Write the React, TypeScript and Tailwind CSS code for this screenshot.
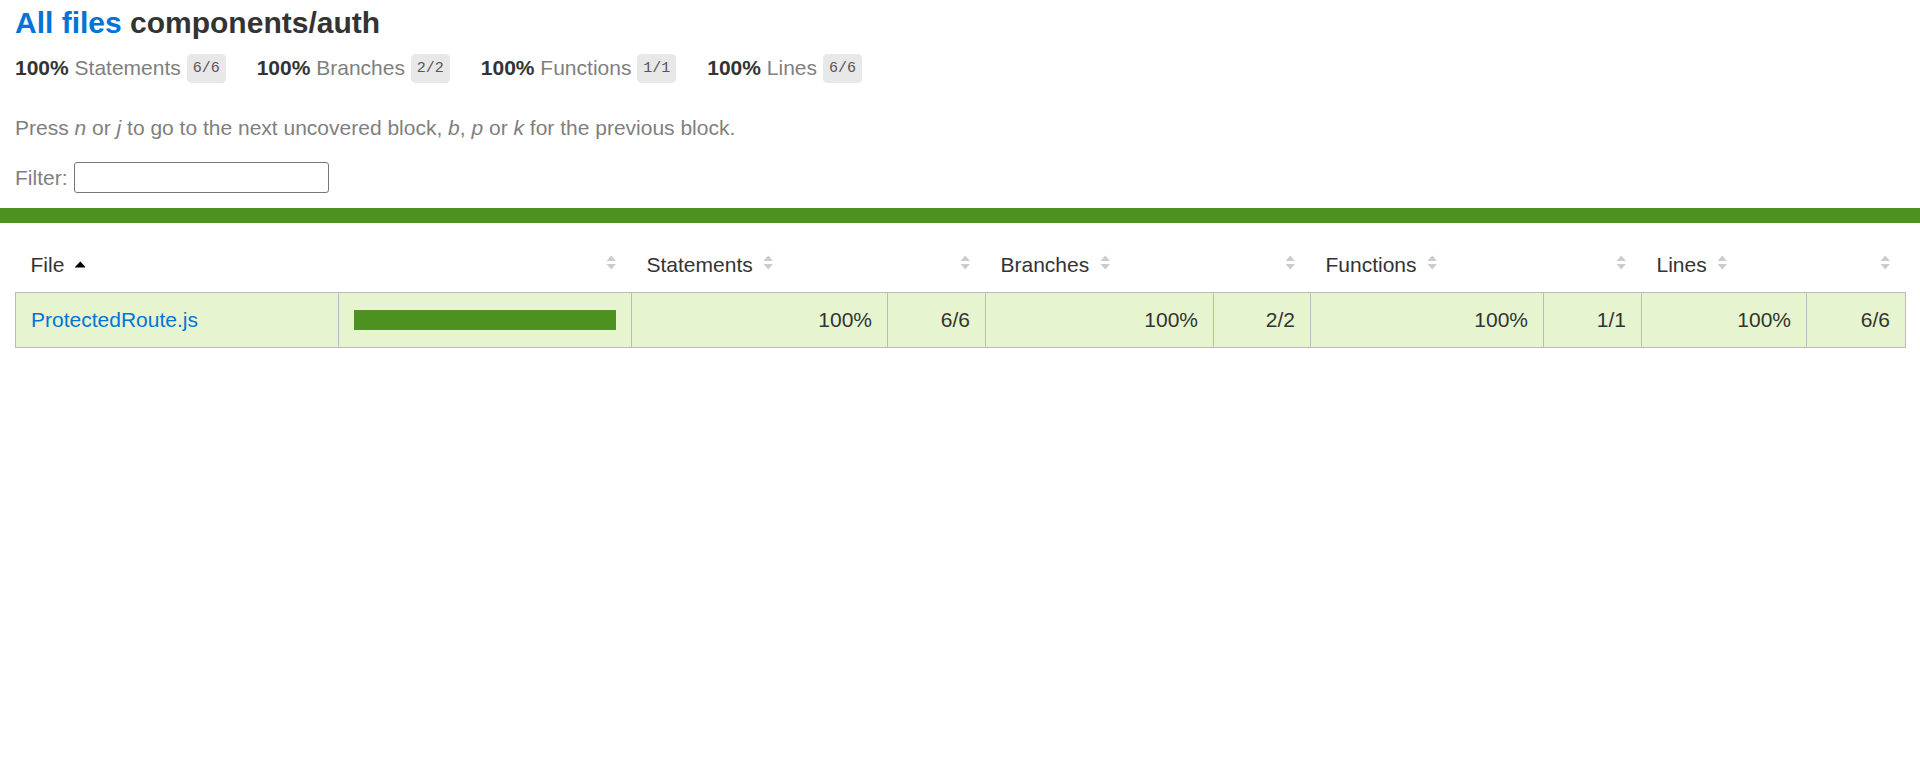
type Metric = { label: string; pct: string; frac: string }

const metrics: Metric[] = [
  { label: "Statements", pct: "100%", frac: "6/6" },
  { label: "Branches", pct: "100%", frac: "2/2" },
  { label: "Functions", pct: "100%", frac: "1/1" },
  { label: "Lines", pct: "100%", frac: "6/6" },
]

const cols = [323, 293, 256, 98, 228, 97, 233, 98, 165, 99]

function Sorter({ sorted = false }: { sorted?: boolean }) {
  return (
    <svg
      width="10.5"
      height="15"
      viewBox="0 0 10.5 15"
      className="ml-[10.5px] inline-block align-[2px]"
    >
      {sorted ? (
        <polygon points="-0.5,12.5 5.25,6.5 11,12.5" fill="#000" />
      ) : (
        <>
          <polygon points="0.5,6 5.25,0.5 10,6" fill="#cccccc" />
          <polygon points="0.5,9 5.25,14.5 10,9" fill="#cccccc" />
        </>
      )}
    </svg>
  )
}

const row = ["100%", "6/6", "100%", "2/2", "100%", "1/1", "100%", "6/6"]

export default function App() {
  return (
    <div className="min-h-screen bg-white font-['Liberation_Sans',Arial,sans-serif] text-[21px] text-[#333]">
      <div className="px-[15px] pt-[6px]">
        <h1 className="m-0 text-[30px] font-bold leading-[34px]">
          <a href="#" className="text-[#0074D9]">All files</a> components/auth
        </h1>

        <div className="mt-[16px] flex leading-[24px]">
          {metrics.map((m) => (
            <div key={m.label} className="pr-[31px] whitespace-nowrap">
              <span className="font-bold">{m.pct}</span>{" "}
              <span className="text-[#7f7f7f]">{m.label}</span>{" "}
              <span className="rounded-[4.5px] bg-[#e8e8e8] px-[6px] py-[6px] align-middle font-['Liberation_Mono',monospace] text-[15px] text-[#555]">
                {m.frac}
              </span>
            </div>
          ))}
        </div>

        <p className="mt-[35px] leading-[24px] text-[#7f7f7f]">
          Press <em>n</em> or <em>j</em> to go to the next uncovered block, <em>b</em>, <em>p</em> or{" "}
          <em>k</em> for the previous block.
        </p>

        <div className="mt-[22px] flex h-[31px] items-center leading-[24px] text-[#7f7f7f]">
          <span>Filter:</span>
          <input
            type="search"
            className="ml-[6px] h-[31px] w-[255px] rounded-[3px] border border-[#767676] bg-white px-1 outline-none"
          />
        </div>
      </div>

      <div className="mt-[15px] h-[15px] bg-[rgb(77,146,33)]" />

      <div className="px-[15px] pt-[15px]">
        <table className="w-full table-fixed border-collapse">
          <colgroup>
            {cols.map((w, i) => (
              <col key={i} style={{ width: w }} />
            ))}
          </colgroup>
          <thead>
            <tr className="leading-[24px]">
              <th className="whitespace-nowrap p-[15px] text-left font-normal">
                File<Sorter sorted />
              </th>
              <th className="p-[15px] text-right font-normal"><Sorter /></th>
              <th className="whitespace-nowrap p-[15px] text-left font-normal">
                Statements<Sorter />
              </th>
              <th className="p-[15px] text-right font-normal"><Sorter /></th>
              <th className="whitespace-nowrap p-[15px] text-left font-normal">
                Branches<Sorter />
              </th>
              <th className="p-[15px] text-right font-normal"><Sorter /></th>
              <th className="whitespace-nowrap p-[15px] text-left font-normal">
                Functions<Sorter />
              </th>
              <th className="p-[15px] text-right font-normal"><Sorter /></th>
              <th className="whitespace-nowrap p-[15px] text-left font-normal">
                Lines<Sorter />
              </th>
              <th className="p-[15px] text-right font-normal"><Sorter /></th>
            </tr>
          </thead>
          <tbody className="border border-[#bbb]">
            <tr className="border-b border-[#bbb] bg-[rgb(230,245,208)] leading-[24px]">
              <td className="whitespace-nowrap border-r border-[#bbb] p-[15px]">
                <a href="#" className="text-[#0074D9]">ProtectedRoute.js</a>
              </td>
              <td className="border-r border-[#bbb] p-[15px]">
                <div className="flex h-[24px] items-center">
                  <div className="h-[20px] w-full border border-[rgb(77,146,33)] bg-[rgb(77,146,33)]" />
                </div>
              </td>
              {row.map((v, i) => (
                <td
                  key={i}
                  className={`p-[15px] text-right ${i < row.length - 1 ? "border-r border-[#bbb]" : ""}`}
                >
                  {v}
                </td>
              ))}
            </tr>
          </tbody>
        </table>
      </div>
    </div>
  )
}
